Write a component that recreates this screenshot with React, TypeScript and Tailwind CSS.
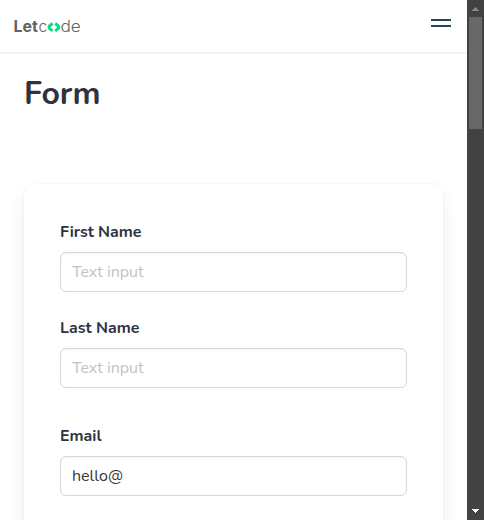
import React from 'react';

const sans = "font-['Nunito','Open_Sans',sans-serif]";

function Logo() {
  return (
    <svg width="70" height="24" viewBox="0 0 70 24" aria-label="Letcode" className="block overflow-visible font-['Inter','Open_Sans',sans-serif]">
      <g fill="#626365" fontSize="16">
        <text x="-0.5" y="17" fontWeight="700" textLength="24.4" lengthAdjust="spacingAndGlyphs">Let</text>
        <text x="24.4" y="17" fontWeight="300" textLength="8.8" lengthAdjust="spacingAndGlyphs">c</text>
        <text x="46.4" y="17" fontWeight="300" textLength="20.4" lengthAdjust="spacingAndGlyphs">de</text>
      </g>
      <g fill="none" stroke="#05dc85" strokeWidth="3" strokeLinejoin="round">
        <path d="M38.6 8.6 35.9 10.5Q34.2 12.2 35.9 13.9L38.6 15.9" />
        <path d="M41.2 8.6 43.9 10.5Q45.6 12.2 43.9 13.9L41.2 15.9" />
      </g>
    </svg>
  );
}

function Header() {
  return (
    <header className="flex h-[54px] shrink-0 items-start justify-between border-b-2 border-[#f4f4f4] bg-white pr-4 pl-3.5">
      <div className="pt-[15px]"><Logo /></div>
      <button aria-label="menu" className="mt-[19px] flex w-5 flex-col gap-1">
        <span className="h-0.5 bg-[#284653]" />
        <span className="h-0.5 bg-[#284653]" />
      </button>
    </header>
  );
}

type FieldProps = { label: string; value?: string; className?: string };

function Field({ label, value, className = '' }: FieldProps) {
  return (
    <div className={className}>
      <label className="block h-6 text-base leading-6 font-bold text-[#2e333d]">{label}</label>
      <input
        type="text"
        placeholder="Text input"
        defaultValue={value}
        className="mt-2 block h-10 w-full rounded-md border border-[#d6d6e0] bg-white px-[11px] text-base text-[#363636] shadow-[inset_0_1px_2px_rgba(10,10,10,0.05)] outline-none placeholder:text-[#c1c2c6]"
      />
    </div>
  );
}

function Scrollbar() {
  return (
    <div className="flex w-[17px] shrink-0 flex-col items-center bg-[#424242]">
      <div className="flex h-[17px] items-start pt-[7px]">
        <svg width="7" height="4" viewBox="0 0 7 4" shapeRendering="crispEdges"><path d="M3 0h1v1h1v1h1v1h1v1H0V3h1V2h1V1h1z" fill="#868686" /></svg>
      </div>
      <div className="h-28 w-[13px] bg-[#686868]" />
      <div className="mt-auto flex h-[17px] items-start pt-1.5">
        <svg width="7" height="4" viewBox="0 0 7 4" shapeRendering="crispEdges"><path d="M0 0h7v1H6v1H5v1H4v1H3V3H2V2H1V1H0z" fill="#fff" /></svg>
      </div>
    </div>
  );
}

export default function App() {
  return (
    <div className={`flex h-[520px] w-[484px] overflow-hidden bg-white ${sans}`}>
      <div className="flex min-w-0 flex-1 flex-col overflow-hidden">
        <Header />
        <main className="px-6 pt-[22px]">
          <h1 className="h-9 text-[32px] leading-9 font-bold text-[#2e333d]">Form</h1>
          <section className="mt-[72px] h-[420px] w-[419px] rounded-xl bg-white px-9 pt-9 shadow-[0_8px_18px_rgba(10,10,10,0.07),0_0_0_1px_rgba(10,10,10,0.02)]">
            <Field label="First Name" />
            <Field label="Last Name" className="mt-6" />
            <Field label="Email" value="hello@" className="mt-9" />
          </section>
        </main>
      </div>
      <Scrollbar />
    </div>
  );
}
